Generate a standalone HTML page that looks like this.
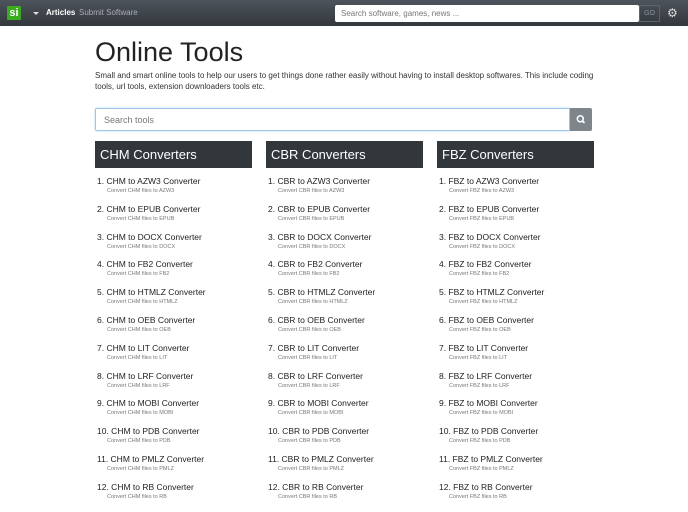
<!DOCTYPE html>
<html style="width:688px;height:512px;overflow:hidden"><head><meta charset="utf-8"><style>
*{box-sizing:border-box;margin:0;padding:0}
body{width:688px;height:512px;overflow:hidden;background:#fff;font-family:"Liberation Sans",sans-serif;color:#222;position:relative}
.nav{position:absolute;left:0;top:0;width:688px;height:26px;background:linear-gradient(#4d545b,#32373c);}
.logo{position:absolute;left:7px;top:6px;width:14px;height:14px;background:#3bab20;color:#fff;font-weight:bold;font-size:11px;line-height:14px;text-align:center;border-radius:1px}
.caret{position:absolute;left:33px;top:12px;border-left:3px solid transparent;border-right:3px solid transparent;border-top:3px solid #ddd}
.na{position:absolute;top:8px;font-size:8px;color:#fff;font-weight:bold}
.nb{position:absolute;top:8px;font-size:8px;color:#aab}
.ns{position:absolute;left:335px;top:5px;width:304px;height:17px;background:#fff;border-radius:2px;font-size:8px;color:#777;padding:4px 6px}
.go{position:absolute;left:639px;top:5px;width:21px;height:17px;border:1px solid #5d646b;color:#8a9097;font-size:7px;text-align:center;line-height:15px}
.gear{position:absolute;left:667px;top:7px;color:#ddd;font-size:12px;line-height:12px}
h1{position:absolute;left:95px;top:37px;font-size:27px;font-weight:normal;color:#222}
.p{position:absolute;left:95px;top:70px;width:500px;font-size:8px;line-height:11px;color:#333}
.si{position:absolute;left:95px;top:108px;width:475px;height:23px;border:1px solid #9ec5ec;border-radius:2px 0 0 2px;box-shadow:0 0 2px #b8d6f3;font-size:9px;color:#777;padding:6px 8px}
.sb{position:absolute;left:570px;top:108px;width:22px;height:23px;background:#7e858b;border-radius:0 2px 2px 0}
.col{position:absolute;top:141px;width:157px}
.hd{height:27px;background:#32373c;color:#fff;font-size:13px;padding:6px 5px;line-height:15px}
ol{list-style:none;margin-top:8px}
li{height:27.8px;padding-left:2px}
.t{font-size:8.5px;line-height:11px;color:#222}
.s{font-size:5.5px;line-height:8px;color:#777;padding-left:10px}
</style></head><body>
<div class="nav">
<div class="logo">si</div><div class="caret"></div>
<div class="na" style="left:46px">Articles</div>
<div class="nb" style="left:79px">Submit Software</div>
<div class="ns">Search software, games, news ...</div>
<div class="go">GO</div>
<div class="gear">⚙</div>
</div>
<h1>Online Tools</h1>
<div class="p">Small and smart online tools to help our users to get things done rather easily without having to install desktop softwares. This include coding tools, url tools, extension downloaders tools etc.</div>
<div class="si">Search tools</div>
<div class="sb"><svg width="22" height="23" viewBox="0 0 22 23"><circle cx="10.3" cy="10.8" r="3" fill="none" stroke="#fff" stroke-width="1.5"/><line x1="12.5" y1="13" x2="14.5" y2="15" stroke="#fff" stroke-width="1.6"/></svg></div>
<div id="cols"></div>
<script>
var f=["AZW3","EPUB","DOCX","FB2","HTMLZ","OEB","LIT","LRF","MOBI","PDB","PMLZ","RB","PDF"];
var c=[["CHM",95],["CBR",266],["FBZ",437]],h="";
c.forEach(function(x){h+='<div class="col" style="left:'+x[1]+'px"><div class="hd">'+x[0]+' Converters</div><ol>';
f.forEach(function(y,i){h+='<li><div class="t">'+(i+1)+'. '+x[0]+' to '+y+' Converter</div><div class="s">Convert '+x[0]+' files to '+y+'</div></li>';});
h+='</ol></div>';});
document.getElementById("cols").innerHTML=h;
</script>
</body></html>
